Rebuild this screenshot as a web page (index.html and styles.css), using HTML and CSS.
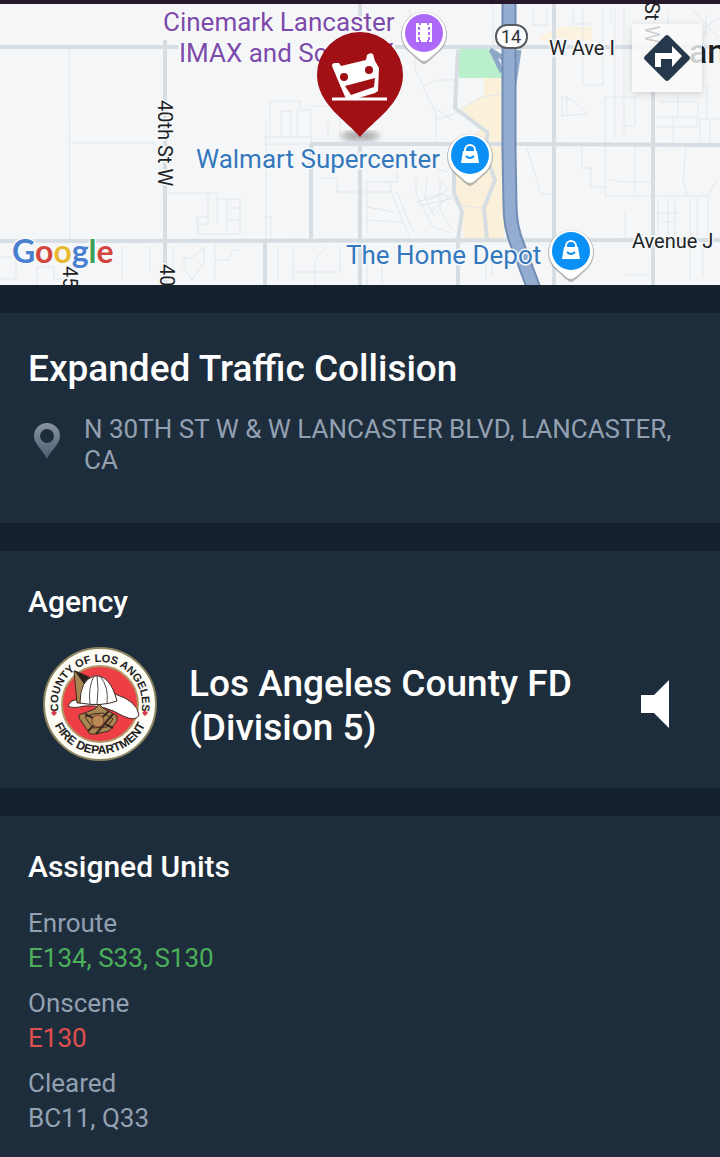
FILE: index.html
```html
<!DOCTYPE html>
<html lang="en">
<head>
    <meta charset="UTF-8">
    <meta name="viewport" content="width=device-width, initial-scale=1.0">
    <title>Expanded Traffic Collision</title>
    <link rel="stylesheet" href="styles.css">
</head>
<body>
    <div class="map">
        <svg class="map-canvas" viewBox="0 4 720 281" preserveAspectRatio="xMidYMid slice">
            <defs>
                <filter id="blur"><feGaussianBlur stdDeviation="3"/></filter>
                <g id="poi">
                    <path class="poi-shadow" d="M0 31C-3 31-8 25-14 20A23 23 0 1 1 14 20C8 25 3 31 0 31Z"/>
                    <path fill="#fff" d="M0 28C-3 28-8 23-14 18A22 22 0 1 1 14 18C8 23 3 28 0 28Z"/>
                </g>
                <g id="bag">
                    <path fill="#fff" d="M-7-4H7L9 8H-9Z"/>
                    <path fill="none" stroke="#fff" stroke-width="2" d="M-5-3V-5A5 5 0 0 1 5-5V-3"/>
                    <path fill="none" stroke="#0b90f5" stroke-width="2" d="M-4 1Q0 5 4 1"/>
                </g>
            </defs>
            <rect y="4" width="720" height="281" fill="#f5f6f7"/>

            <!-- parks and commercial areas -->
            <path fill="#b9f0cb" d="M459 49H492L503 78H459Z"/>
            <path fill="#fbf0d9" d="M484 78H504V240H464L461 212L455 193V150L482 128L461 109L484 96Z"/>
            <path fill="#fbf3df" d="M540 36L560 27H592V40H540Z"/>

            <!-- minor streets -->
            <g class="streets">
                <path d="M69 48L70 240M71 143H155M165 193H217V224M208 193V224H197V217H209M217 199H240V234H198V217M227 199V232M227 208H240M227 220H240"/>
                <path d="M0 257H16V279H0M37 285V267H54V279H66M122 247V279M150 247V272M173 247V280M184 258H192L204 247V262L192 280L184 268V258M215 240V280M215 260H229L232 250H240"/>
                <path d="M266 120V240M270 140V101H300V110H311V142M281 136V111H291V136M264 137H310M297 137V110M311 106H340V136M328 122V140M264 144H311M264 217H271V235"/>
                <path d="M320 178H337V192H367V182H397V166H367M367 192H391V182M367 192V233M367 207L394 212M367 220L402 222M391 192L409 236M397 192L413 232M416 178V193L432 226L450 233M427 177L425 196L434 216M438 178L449 190M416 203L449 190M418 206L450 199"/>
                <path d="M278 247V280M293 247V280M315 285V259L327 247M340 247V272H293M367 250V285M382 250V285"/>
                <path d="M415 50V69L436 114V142M425 85L437 80H456M437 120L460 112M410 10V48M452 120L436 109M430 168L448 172M430 213L453 193"/>
                <path d="M461 109L482 97L504 94M493 5V45M471 157L470 178L484 189M460 205L484 209M440 180V210L452 230M430 200L441 194L456 200"/>
                <path d="M533 8V25H547V8M573 8V24H590M611 8V22M583 8V85H603V8M615 8V138M624 8V134M605 97H635V126M605 97V142M621 126H634M562 96V116L587 114Q577 101 562 96M567 96V116"/>
                <path d="M527 148L541 194H556M582 146V168H591V187H605M605 146V196H708L718 178M609 179L622 182H655M635 147V194M686 147L683 180L687 195M656 117H698V102H660M678 93V117M707 85V118M656 127H697V117M673 117V142M698 119H720M700 120V142M710 120V142"/>
                <path d="M658 200V240M668 198V240M675 198V240M690 198V240M697 198V240M656 213H678M662 222H673M708 196V240M625 275H650M565 250V280M486 250V280M492 250V277M690 245V280M703 247V278M625 210V240M693 10L719 38M703 28L720 18M706 15V37M668 10V25"/>
            </g>

            <!-- main roads -->
            <g class="roads">
                <path d="M0 47H178M165 40V240M0 241L720 240M165 240V285M265 241V285M311 144V240M360 144V285M360 4V46M310 144H510L720 145M395 47H720M554 4V285M653 92V285M458 285V240L462 212L454 193V160M458 50L455 108L487 132V158L495 180L484 208L487 240"/>
            </g>

            <!-- freeway -->
            <path fill="none" stroke="#8ea6c8" stroke-width="5" d="M490 50L503 58L510 84M519 50L514 84M492 51L502 72"/>
            <path fill="none" stroke="#718cb5" stroke-width="15" d="M509 4V150L510 205Q510 228 518 246L534 289"/>
            <path fill="none" stroke="#94accf" stroke-width="11" d="M509 4V150L510 205Q510 228 518 246L534 289"/>
            <rect x="496" y="25" width="31" height="23" rx="11" fill="#fff" stroke="#555b60" stroke-width="2"/>

            <!-- labels -->
            <text class="label-shield" x="511" y="43">14</text>
            <text class="label-road" x="549" y="55">W Ave I</text>
            <text class="label-road" x="632" y="248">Avenue J</text>
            <text class="label-road" transform="translate(158 100) rotate(90)">40th St W</text>
            <text class="label-road" transform="translate(160 264) rotate(90)">40</text>
            <text class="label-road" transform="translate(63 266) rotate(90)">45</text>
            <text class="label-road" transform="translate(645 2) rotate(90)">St W</text>
            <text class="label-city" x="689" y="63">an</text>
            <text class="label-cinema" x="163" y="31">Cinemark Lancaster</text>
            <text class="label-cinema" x="179" y="62">IMAX and ScreenX</text>
            <text class="label-shop" x="196" y="168">Walmart Supercenter</text>
            <text class="label-shop" x="346" y="264">The Home Depot</text>

            <!-- places -->
            <g transform="translate(424 33)">
                <use href="#poi"/>
                <circle r="19" fill="#ae68f8"/>
                <path fill="#fff" d="M-8-10H-5V-8H-3V-10H3V-8H5V-10H8V9H5V7H3V9H-3V7H-5V9H-8Z"/>
                <path stroke="#ae68f8" stroke-width="2" stroke-dasharray="3 2" d="M-5-6V7M5-6V7"/>
            </g>
            <g transform="translate(470 155)">
                <use href="#poi"/>
                <circle r="19" fill="#0b90f5"/>
                <use href="#bag"/>
            </g>
            <g transform="translate(571 251)">
                <use href="#poi"/>
                <circle r="19" fill="#0b90f5"/>
                <use href="#bag"/>
            </g>

            <!-- incident pin -->
            <ellipse cx="360" cy="136" rx="19" ry="5" fill="#555" opacity=".5" filter="url(#blur)"/>
            <path fill="#a01015" d="M360 137C347 121 317 104 317 75A43 43 0 0 1 403 75C403 104 373 121 360 137Z"/>
            <path fill="#fff" d="M332 66Q332 63 335 63L339 63L341 66L366 60L367 55Q370 52 373 54L375 61L379 68L378 91L375 93L355 99H346L337 78Z"/>
            <circle cx="344" cy="77" r="4" fill="#a01015"/>
            <circle cx="369" cy="70" r="4" fill="#a01015"/>
            <path fill="#a01015" d="M345 86L375 78L374 87L351 95Z"/>
            <path stroke="#fff" stroke-width="3" d="M332 99H387"/>

            <text class="logo" x="12" y="263"><tspan fill="#4a80d0">G</tspan><tspan fill="#d2463f">o</tspan><tspan fill="#e6b931">o</tspan><tspan fill="#4a80d0">g</tspan><tspan fill="#3d9e58">l</tspan><tspan fill="#d2463f">e</tspan></text>
        </svg>
        <button class="directions" type="button" aria-label="Directions">
            <svg width="48" height="48" viewBox="0 0 48 48">
                <path fill="#26394c" d="M22 2Q24 0 26 2L46 22Q48 24 46 26L26 46Q24 48 22 46L2 26Q0 24 2 22Z"/>
                <path fill="#fff" d="M12 33V19H29V12L39 22L29 33V25H18V33Z"/>
            </svg>
        </button>
    </div>

    <section class="card">
        <h1>Expanded Traffic Collision</h1>
        <div class="address">
            <svg class="address-icon" width="28" height="38" viewBox="0 0 28 38">
                <defs>
                    <linearGradient id="pinFill" x1="0" y1="0" x2="0" y2="1">
                        <stop offset="0" stop-color="#8b949f"/>
                        <stop offset="1" stop-color="#4a5d71"/>
                    </linearGradient>
                </defs>
                <path fill="url(#pinFill)" fill-rule="evenodd" d="M14 1A13 13 0 0 1 27 14C27 22 18 28 14 37C10 28 1 22 1 14A13 13 0 0 1 14 1ZM14 7A7 7 0 1 0 14 21A7 7 0 1 0 14 7Z"/>
            </svg>
            <p>N 30TH ST W &amp; W LANCASTER BLVD, LANCASTER, CA</p>
        </div>
    </section>

    <section class="card">
        <h2>Agency</h2>
        <div class="agency">
            <svg class="seal" width="114" height="114" viewBox="0 0 114 114">
                <defs>
                    <path id="arcTop" d="M16.500 68A42 42 0 1 1 97.500 68"/>
                    <path id="arcBottom" d="M7 57A50 50 0 0 0 107 57"/>
                </defs>
                <circle cx="57" cy="57" r="56" fill="#fdfcf5" stroke="#8d8560" stroke-width="2"/>
                <circle cx="57" cy="57" r="38" fill="#ee3f46" stroke="#b39566" stroke-width="2"/>
                <text class="seal-text seal-top"><textPath href="#arcTop" startOffset="50%">COUNTY OF LOS ANGELES</textPath></text>
                <text class="seal-text"><textPath href="#arcBottom" startOffset="50%">FIRE DEPARTMENT</textPath></text>
                <path fill="#d63d48" d="M11 63L14 66L11 69L8 66ZM102 63L105 66L102 69L99 66Z"/>
                <path fill="#fff" stroke="#3b2a20" d="M25 59Q28 52 35 53L72 47Q94 54 96 68Q93 75 80 69Q60 57 41 59Q30 62 25 59Z"/>
                <path fill="#a98552" stroke="#3b2a20" d="M31 24L47 31L38 56L34 56Z"/>
                <path fill="#2a2320" d="M31 23L47 30L41 37Z"/>
                <path fill="#fff" stroke="#3b2a20" d="M37 56Q37 33 51 29Q67 27 74 54Q58 60 37 56Z"/>
                <path fill="none" stroke="#55504d" d="M51 29Q45 40 47 57M54 29Q56 42 54 57M57 29Q66 40 64 56"/>
                <path fill="#a98552" stroke="#3b2a20" d="M56 57L60 61L74 69V74L66 84L53 87H47L36 71V68L52 62Z"/>
                <path stroke="#3b2a20" stroke-width="2" d="M42 67L70 81M70 67L53 87M45 84L66 64"/>
                <path fill="none" stroke="#3b2a20" d="M42 70L50 81L64 80L70 72L60 66L50 67Z"/>
                <circle cx="55" cy="74" r="6" fill="#b78a56" stroke="#8c3a28"/>
            </svg>
            <p class="agency-name">Los Angeles County FD (Division 5)</p>
            <button class="speaker" type="button" aria-label="Listen">
                <svg width="28" height="48" viewBox="0 0 28 48">
                    <path fill="#fff" d="M0 15H13L28 0V48L13 33H0Z"/>
                </svg>
            </button>
        </div>
    </section>

    <section class="card units">
        <h2>Assigned Units</h2>
        <dl>
            <div class="unit-group">
                <dt>Enroute</dt>
                <dd class="enroute">E134, S33, S130</dd>
            </div>
            <div class="unit-group">
                <dt>Onscene</dt>
                <dd class="onscene">E130</dd>
            </div>
            <div class="unit-group">
                <dt>Cleared</dt>
                <dd>BC11, Q33</dd>
            </div>
        </dl>
    </section>
</body>
</html>
```
FILE: styles.css
```css
* {
    box-sizing: border-box;
}
body {
    font-family: Roboto, sans-serif;
    display: flex;
    flex-direction: column;
    gap: 28px;
    min-height: 100vh;
    margin: 0;
    background-color: #15212c;
    color: #93a0b1;
    font-size: 26px;
}
h1, h2, p, dl, dd {
    margin: 0;
}
button {
    display: flex;
    justify-content: center;
    align-items: center;
    border: none;
    cursor: pointer;
}

/* map */
.map {
    position: relative;
    border-top: 4px solid #25182a;
}
.map-canvas {
    display: block;
    width: 100%;
}
.streets {
    fill: none;
    stroke: #e3e7ea;
    stroke-width: 1;
}
.roads {
    fill: none;
    stroke: #d6dde3;
    stroke-width: 4;
}
.map text {
    paint-order: stroke;
    stroke: #f8f9fa;
    stroke-width: 3px;
}
.label-road {
    font-size: 20px;
    fill: #202326;
}
.label-shield {
    font-size: 18px;
    fill: #303438;
    text-anchor: middle;
}
.label-city {
    font-size: 34px;
    font-weight: 500;
    fill: #202326;
}
.label-cinema {
    font-size: 26px;
    fill: #7d4bab;
}
.label-shop {
    font-size: 26px;
    fill: #3478bd;
}
.logo {
    font-family: Lato, sans-serif;
    font-size: 32px;
    font-weight: bold;
}
.poi-shadow {
    fill: #777;
    opacity: 0.5;
}
.directions {
    position: absolute;
    top: 20px;
    right: 18px;
    width: 70px;
    height: 68px;
    padding: 0;
    background-color: rgba(250, 250, 250, 0.8);
    box-shadow: 0 2px 8px rgba(0, 0, 0, 0.15);
}

/* cards */
.card {
    padding: 34px 28px 27px;
    background-color: #1e2d3c;
}
h1 {
    color: #fff;
    font-size: 37px;
    font-weight: 500;
    line-height: 44px;
}
h2 {
    color: #fff;
    font-size: 30px;
    font-weight: 500;
    line-height: 34px;
}
.address {
    display: flex;
    align-items: flex-start;
    gap: 23px;
    margin: 23px 0 20px;
    padding-left: 5px;
    line-height: 31px;
}
.address-icon {
    flex: none;
    margin-top: 8px;
}
.agency {
    display: flex;
    align-items: center;
    gap: 32px;
    margin-top: 28px;
    padding: 0 23px 0 15px;
}
.seal {
    flex: none;
}
.seal-text {
    font-family: "Liberation Sans", Arial, sans-serif;
    font-size: 12px;
    font-weight: bold;
    fill: #222;
    text-anchor: middle;
}
.seal-top {
    font-size: 11px;
}
.agency-name {
    flex: 1;
    padding-top: 4px;
    color: #fff;
    font-size: 37px;
    font-weight: 500;
    line-height: 44px;
}
.speaker {
    padding: 0;
    background: none;
}
.units {
    flex: 1;
}
.units dl {
    display: flex;
    flex-direction: column;
    gap: 10px;
    margin-top: 22px;
    line-height: 35px;
}
.enroute {
    color: #4caf5a;
}
.onscene {
    color: #e0504f;
}
```
